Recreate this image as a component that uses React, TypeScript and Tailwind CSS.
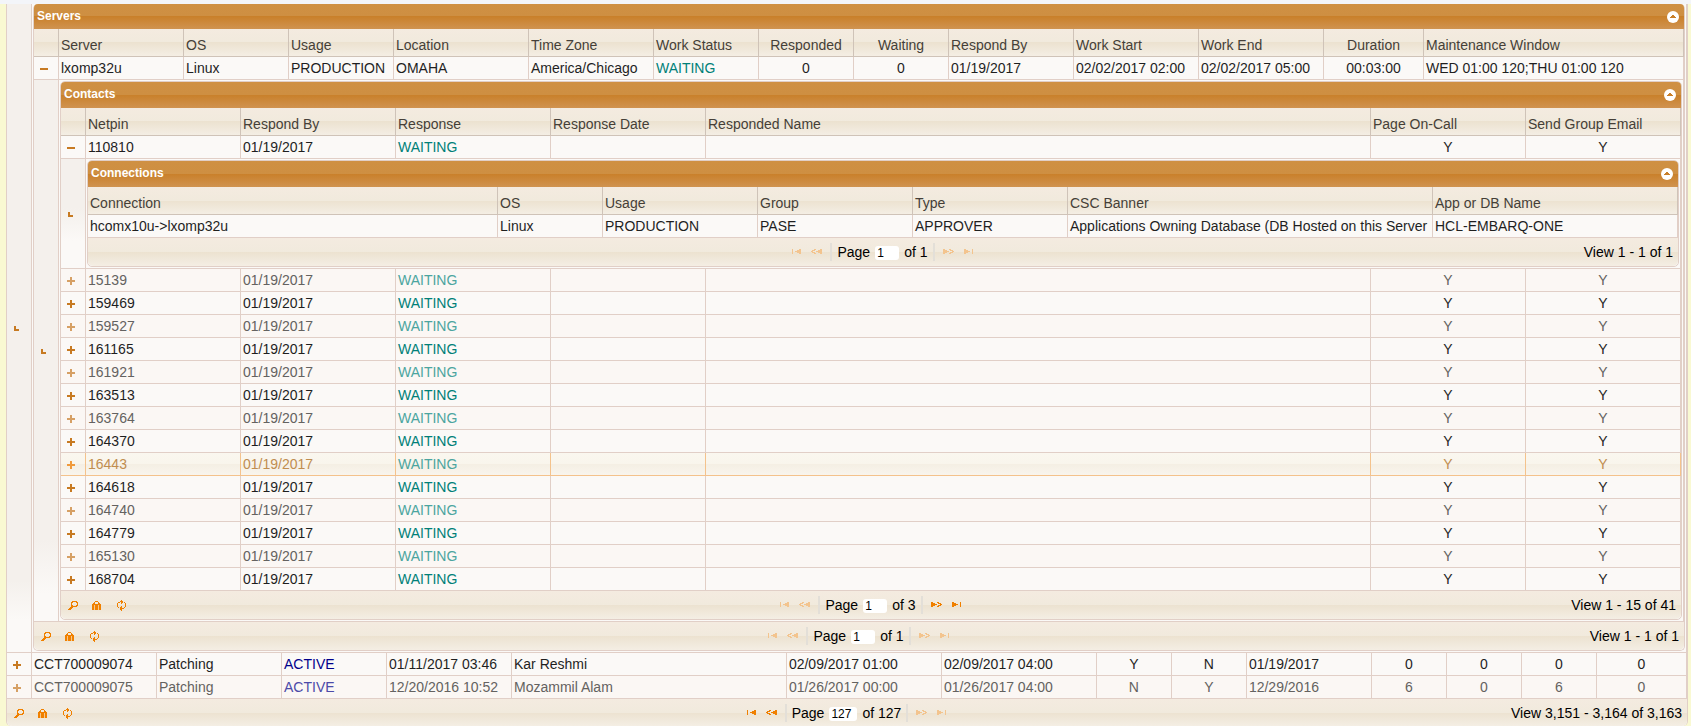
import { useState, type ReactNode } from "react";
import clsx from "clsx";

type Column = { label: string; width: string; center?: boolean };
type Tone = "normal" | "muted" | "hover";

const rowBorder = "border-[#e1cfc7]";
const glass =
  "bg-[linear-gradient(to_bottom,#f4ebe0_0%,#f1eadd_50%,#ece2d0_50%,#f4eee4_100%)]";
const titleGlass =
  "bg-[linear-gradient(to_bottom,#cf9043_0%,#ce8f42_50%,#c9802a_50%,#d09350_100%)]";

/* ---------- icons ---------- */

function Icon({ className, children }: { className?: string; children: ReactNode }) {
  return (
    <svg
      viewBox="0 0 16 16"
      shapeRendering="crispEdges"
      fill="currentColor"
      aria-hidden="true"
      className={clsx("block size-4 shrink-0", className)}
    >
      {children}
    </svg>
  );
}

const endPath = "M4 5h1v5h-1zM11 5h2v5h-2zM9 6h2v3h-2zM7 7h2v1h-2z";
const stepPath =
  "M11 5h2v5h-2zM9 6h2v3h-2zM7 7h2v1h-2zM5 5h2v1h-2zM3 6h3v1h-3zM2 7h2v1h-2zM3 8h3v1h-3zM5 9h2v1h-2z";

const PlusIcon = () => (
  <Icon>
    <path d="M4 7h8v2H4zM7 4h2v8H7z" />
  </Icon>
);
const MinusIcon = () => (
  <Icon>
    <path d="M4 7h8v2H4z" />
  </Icon>
);
const BranchIcon = () => (
  <Icon className="text-[#c77a22]">
    <path d="M5 6h2v3h3v2H5z" />
  </Icon>
);
const FirstIcon = () => (
  <Icon>
    <path d={endPath} />
  </Icon>
);
const PrevIcon = () => (
  <Icon>
    <path d={stepPath} />
  </Icon>
);
const NextIcon = () => (
  <Icon className="-scale-x-100">
    <path d={stepPath} />
  </Icon>
);
const LastIcon = () => (
  <Icon className="-scale-x-100">
    <path d={endPath} />
  </Icon>
);
const SearchIcon = () => (
  <Icon>
    <path d="M7 4h5v1H7zM6 5h2v1H6zM11 5h2v1h-2zM6 6h1v2H6zM12 6h1v2h-1zM6 8h2v1H6zM11 8h2v1h-2zM6 9h6v1H6zM5 10h3v1H5zM4 11h3v1H4zM3 12h3v1H3z" />
  </Icon>
);
const CaseIcon = () => (
  <Icon>
    <path d="M6 4h3v1H6zM5 5h1v2H5zM9 5h1v2H9zM4 6h1v1H4zM10 6h1v1h-1zM3 7h9v6H3z" />
    <path d="M5 8h1v5H5zM9 8h1v5H9z" fill="#f6c88c" />
  </Icon>
);
const RefreshIcon = () => (
  <Icon>
    <path d="M8 3h1v1H8zM7 4h3v1H7zM6 5h1v1H6zM8 5h2v1H8zM8 6h1v1H8zM5 5h1v1H5zM4 6h1v4H4zM5 10h1v1H5zM11 5h1v1h-1zM12 6h1v4h-1zM11 10h1v1h-1zM10 11h1v1h-1zM8 9h1v1H8zM7 10h2v1H7zM7 11h3v1H7zM7 12h2v1H7zM8 13h1v1H8z" />
  </Icon>
);

/* ---------- shared parts ---------- */

function TitleBar({
  title,
  height,
  onCollapse,
}: {
  title: string;
  height: string;
  onCollapse: () => void;
}) {
  return (
    <div
      className={clsx(
        "flex items-center justify-between rounded-t-[4px] pl-[3px] pr-[5px]",
        titleGlass,
        height,
      )}
    >
      <h2 className="pb-[2px] text-xs font-bold leading-4 text-white">{title}</h2>
      <button
        type="button"
        aria-label={`Collapse ${title}`}
        onClick={onCollapse}
        className="flex size-3 items-center justify-center rounded-full bg-white text-[#c9802a]"
      >
        <svg
          viewBox="0 0 6 4"
          shapeRendering="crispEdges"
          fill="currentColor"
          className="h-1 w-[6px]"
          aria-hidden="true"
        >
          <path d="M2 0h2v1h1v1h1v1H0V2h1V1h1z" />
        </svg>
      </button>
    </div>
  );
}

function Panel({
  title,
  top = false,
  children,
}: {
  title: string;
  top?: boolean;
  children: ReactNode;
}) {
  const [open, setOpen] = useState(true);
  return (
    <section
      className={clsx("rounded-[5px] border bg-[#fbf9f7]", rowBorder, top && "border-t-0")}
    >
      <TitleBar
        title={title}
        height={top ? "h-[25px]" : "h-[26px]"}
        onCollapse={() => setOpen(!open)}
      />
      {open && children}
    </section>
  );
}

function Grid({
  label,
  columns,
  expandable = true,
  header = true,
  children,
}: {
  label: string;
  columns: Column[];
  expandable?: boolean;
  header?: boolean;
  children: ReactNode;
}) {
  return (
    <table aria-label={label} className="w-full table-fixed border-separate border-spacing-0">
      <colgroup>
        {expandable && <col className="w-[25px]" />}
        {columns.map((c, i) => (
          <col key={i} className={c.width} />
        ))}
      </colgroup>
      {header && (
        <thead>
          <tr>
            {expandable && (
              <th className={clsx("h-7 border-b border-r border-[#cfc3b8] p-0", glass)} />
            )}
            {columns.map((c, i) => (
              <th
                key={i}
                scope="col"
                className={clsx(
                  "h-7 overflow-hidden whitespace-nowrap border-b border-r border-[#cfc3b8] px-[2px] pb-0 pt-1 font-normal leading-5 text-[#453f38]",
                  c.center ? "text-center" : "text-left",
                  glass,
                )}
              >
                {c.label}
              </th>
            ))}
          </tr>
        </thead>
      )}
      <tbody>{children}</tbody>
    </table>
  );
}

const rowTone: Record<Tone, string> = {
  normal: "bg-[#fbf9f7] text-[#1f1f1f]",
  muted: "bg-[#fbf7f4] text-[#646260]",
  hover: "bg-[linear-gradient(to_bottom,#faf7ef_0%,#f9f5ec_50%,#f5efe4_50%,#f9f5ee_100%)] text-[#c08d50]",
};
const toggleTone: Record<Tone, string> = {
  normal: "text-[#c77a22]",
  muted: "text-[#d6a065]",
  hover: "text-[#f09a3c]",
};
const statusTone: Record<string, string> = {
  "WAITING-normal": "text-[#008078]",
  "WAITING-muted": "text-[#4ba59f]",
  "WAITING-hover": "text-[#4ba59f]",
  "ACTIVE-normal": "text-[#00008b]",
  "ACTIVE-muted": "text-[#4c4aa8]",
};

function Row({
  cells,
  centered = [],
  tone = "normal",
  toggle,
}: {
  cells: string[];
  centered?: number[];
  tone?: Tone;
  toggle?: "plus" | "minus";
}) {
  const border = tone === "hover" ? "border-[#f4c28c]" : rowBorder;
  return (
    <tr className={rowTone[tone]}>
      {toggle && (
        <td className={clsx("h-[23px] border-b border-r py-0 px-[2px]", border)}>
          <button
            type="button"
            aria-label={`${toggle === "plus" ? "Expand" : "Collapse"} ${cells[0]}`}
            className={clsx("block pt-[2px]", toggleTone[tone])}
          >
            {toggle === "plus" ? <PlusIcon /> : <MinusIcon />}
          </button>
        </td>
      )}
      {cells.map((text, i) => (
        <td
          key={i}
          className={clsx(
            "h-[23px] overflow-hidden whitespace-nowrap border-b border-r px-[2px] pb-px pt-0 leading-5",
            border,
            centered.includes(i) && "text-center",
            statusTone[`${text}-${tone}`],
          )}
        >
          {text}
        </td>
      ))}
    </tr>
  );
}

function SubRow({
  span,
  fade,
  top = false,
  children,
}: {
  span: number;
  fade: string;
  top?: boolean;
  children: ReactNode;
}) {
  return (
    <tr>
      <td className={clsx("border-b border-r px-[2px] py-0 align-middle", rowBorder, fade)}>
        <BranchIcon />
      </td>
      <td
        colSpan={span}
        className={clsx("border-b border-r bg-[#fbf9f7]", rowBorder, top ? "px-px pb-px pt-0" : "p-px")}
      >
        {children}
      </td>
    </tr>
  );
}

function PagerButton({
  label,
  disabled,
  children,
}: {
  label: string;
  disabled?: boolean;
  children: ReactNode;
}) {
  return (
    <button
      type="button"
      aria-label={label}
      disabled={disabled}
      className={disabled ? "text-[#f3c48e]" : "text-[#f08000]"}
    >
      {children}
    </button>
  );
}

function Pager({
  page,
  pages,
  view,
  tools = true,
  atStart = true,
  atEnd = true,
  height = "h-7",
  inputWidth = "w-6",
}: {
  page: string;
  pages: string;
  view: string;
  tools?: boolean;
  atStart?: boolean;
  atEnd?: boolean;
  height?: string;
  inputWidth?: string;
}) {
  return (
    <div
      className={clsx(
        "grid grid-cols-[1fr_auto_1fr] items-center rounded-b-[5px] pl-1 pr-[5px] text-black",
        glass,
        height,
      )}
    >
      <div className="flex gap-2">
        {tools && (
          <>
            <PagerButton label="Find records">
              <SearchIcon />
            </PagerButton>
            <PagerButton label="Select columns">
              <CaseIcon />
            </PagerButton>
            <PagerButton label="Reload grid">
              <RefreshIcon />
            </PagerButton>
          </>
        )}
      </div>
      <div className="flex items-center gap-[5px]">
        <PagerButton label="First page" disabled={atStart}>
          <FirstIcon />
        </PagerButton>
        <PagerButton label="Previous page" disabled={atStart}>
          <PrevIcon />
        </PagerButton>
        <span className="h-[18px] w-[2px] bg-[#e3dfd8]" />
        <label className="flex items-center gap-[5px] leading-5">
          Page
          <input
            type="text"
            defaultValue={page}
            className={clsx(
              "mt-[2px] h-[14px] rounded-[3px] bg-white px-[2px] text-xs leading-[14px] text-black outline-none",
              inputWidth,
            )}
          />
          <span>of {pages}</span>
        </label>
        <span className="h-[18px] w-[2px] bg-[#e3dfd8]" />
        <PagerButton label="Next page" disabled={atEnd}>
          <NextIcon />
        </PagerButton>
        <PagerButton label="Last page" disabled={atEnd}>
          <LastIcon />
        </PagerButton>
      </div>
      <div className="whitespace-nowrap text-right leading-5">{view}</div>
    </div>
  );
}

/* ---------- data ---------- */

const serverColumns: Column[] = [
  { label: "Server", width: "w-[125px]" },
  { label: "OS", width: "w-[105px]" },
  { label: "Usage", width: "w-[105px]" },
  { label: "Location", width: "w-[135px]" },
  { label: "Time Zone", width: "w-[125px]" },
  { label: "Work Status", width: "w-[105px]" },
  { label: "Responded", width: "w-[95px]", center: true },
  { label: "Waiting", width: "w-[95px]", center: true },
  { label: "Respond By", width: "w-[125px]" },
  { label: "Work Start", width: "w-[125px]" },
  { label: "Work End", width: "w-[125px]" },
  { label: "Duration", width: "w-[100px]", center: true },
  { label: "Maintenance Window", width: "w-auto" },
];

const contactColumns: Column[] = [
  { label: "Netpin", width: "w-[155px]" },
  { label: "Respond By", width: "w-[155px]" },
  { label: "Response", width: "w-[155px]" },
  { label: "Response Date", width: "w-[155px]" },
  { label: "Responded Name", width: "w-auto" },
  { label: "Page On-Call", width: "w-[155px]" },
  { label: "Send Group Email", width: "w-[155px]" },
];

const connectionColumns: Column[] = [
  { label: "Connection", width: "w-auto" },
  { label: "OS", width: "w-[105px]" },
  { label: "Usage", width: "w-[155px]" },
  { label: "Group", width: "w-[155px]" },
  { label: "Type", width: "w-[155px]" },
  { label: "CSC Banner", width: "w-[365px]" },
  { label: "App or DB Name", width: "w-[245px]" },
];

const changeColumns: Column[] = [
  { label: "Change", width: "w-[125px]" },
  { label: "Kind", width: "w-[125px]" },
  { label: "Status", width: "w-[105px]" },
  { label: "Created", width: "w-[125px]" },
  { label: "Owner", width: "w-auto" },
  { label: "Start", width: "w-[155px]" },
  { label: "End", width: "w-[155px]" },
  { label: "", width: "w-[75px]" },
  { label: "", width: "w-[75px]" },
  { label: "", width: "w-[125px]" },
  { label: "", width: "w-[75px]" },
  { label: "", width: "w-[75px]" },
  { label: "", width: "w-[75px]" },
  { label: "", width: "w-[90px]" },
];

const contacts = [
  "15139",
  "159469",
  "159527",
  "161165",
  "161921",
  "163513",
  "163764",
  "164370",
  "16443",
  "164618",
  "164740",
  "164779",
  "165130",
  "168704",
];

const contactCells = (netpin: string) => [netpin, "01/19/2017", "WAITING", "", "", "Y", "Y"];
const contactTone = (netpin: string, i: number): Tone =>
  netpin === "16443" ? "hover" : i % 2 === 0 ? "muted" : "normal";

/* ---------- grids ---------- */

function Connections() {
  return (
    <Panel title="Connections">
      <Grid label="Connections" columns={connectionColumns} expandable={false}>
        <Row
          cells={[
            "hcomx10u->lxomp32u",
            "Linux",
            "PRODUCTION",
            "PASE",
            "APPROVER",
            "Applications Owning Database (DB Hosted on this Server",
            "HCL-EMBARQ-ONE",
          ]}
        />
      </Grid>
      <Pager page="1" pages="1" view="View 1 - 1 of 1" tools={false} />
    </Panel>
  );
}

function Contacts() {
  return (
    <Panel title="Contacts">
      <Grid label="Contacts" columns={contactColumns}>
        <Row cells={contactCells("110810")} centered={[5, 6]} toggle="minus" />
        <SubRow
          span={7}
          fade="bg-[linear-gradient(to_bottom,#f4f0ec_0%,#f4f0ec_45%,#fbf9f7_75%)]"
        >
          <Connections />
        </SubRow>
        {contacts.map((netpin, i) => (
          <Row
            key={netpin}
            cells={contactCells(netpin)}
            centered={[5, 6]}
            tone={contactTone(netpin, i)}
            toggle="plus"
          />
        ))}
      </Grid>
      <Pager page="1" pages="3" view="View 1 - 15 of 41" atEnd={false} />
    </Panel>
  );
}

function Servers() {
  return (
    <Panel title="Servers" top>
      <Grid label="Servers" columns={serverColumns}>
        <Row
          cells={[
            "lxomp32u",
            "Linux",
            "PRODUCTION",
            "OMAHA",
            "America/Chicago",
            "WAITING",
            "0",
            "0",
            "01/19/2017",
            "02/02/2017 02:00",
            "02/02/2017 05:00",
            "00:03:00",
            "WED 01:00 120;THU 01:00 120",
          ]}
          centered={[6, 7, 11]}
          toggle="minus"
        />
        <SubRow
          span={13}
          fade="bg-[linear-gradient(to_bottom,#f4f0ec_0%,#f4f0ec_85%,#fbf9f7_95%)]"
        >
          <Contacts />
        </SubRow>
      </Grid>
      <Pager page="1" pages="1" view="View 1 - 1 of 1" />
    </Panel>
  );
}

export default function App() {
  return (
    <div className="min-w-[1440px] bg-[#f9f9d2] pl-[6px] pr-[3px] font-['Liberation_Sans',Arial,sans-serif] text-sm">
      <div className="-ml-[6px] -mr-[3px] h-1 bg-[#f3f5f9]" />
      <main className={clsx("rounded-b-[5px] border-x bg-[#fbf9f7]", rowBorder)}>
        <Grid label="Changes" columns={changeColumns} header={false}>
          <SubRow
            span={14}
            top
            fade="bg-[linear-gradient(to_bottom,#f4f0ec_0%,#f4f0ec_89%,#fbf9f7_95%)]"
          >
            <Servers />
          </SubRow>
          <Row
            cells={[
              "CCT700009074",
              "Patching",
              "ACTIVE",
              "01/11/2017 03:46",
              "Kar Reshmi",
              "02/09/2017 01:00",
              "02/09/2017 04:00",
              "Y",
              "N",
              "01/19/2017",
              "0",
              "0",
              "0",
              "0",
            ]}
            centered={[7, 8, 10, 11, 12, 13]}
            toggle="plus"
          />
          <Row
            cells={[
              "CCT700009075",
              "Patching",
              "ACTIVE",
              "12/20/2016 10:52",
              "Mozammil Alam",
              "01/26/2017 00:00",
              "01/26/2017 04:00",
              "N",
              "Y",
              "12/29/2016",
              "6",
              "0",
              "6",
              "0",
            ]}
            centered={[7, 8, 10, 11, 12, 13]}
            tone="muted"
            toggle="plus"
          />
        </Grid>
        <Pager
          page="127"
          pages="127"
          view="View 3,151 - 3,164 of 3,163"
          atStart={false}
          height="h-[27px]"
          inputWidth="w-7"
        />
      </main>
    </div>
  );
}
